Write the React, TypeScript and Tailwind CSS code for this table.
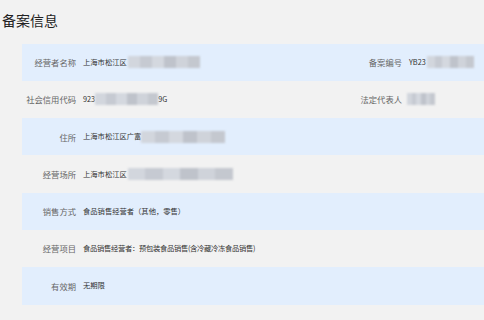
import React from "react";

// Pixelated gray block standing in for redacted text
const Masked: React.FC<{ className: string }> = ({ className }) => (
  <span className={`inline-flex h-[12px] overflow-hidden blur-[1.2px] align-middle ${className}`}>
    <span className="flex-1 bg-[#d2d6dd]" />
    <span className="flex-1 bg-[#c6cad2]" />
    <span className="flex-1 bg-[#d4d8df]" />
    <span className="flex-1 bg-[#bfc3cb]" />
    <span className="flex-1 bg-[#cfd3da]" />
    <span className="flex-1 bg-[#c4c8cf]" />
  </span>
);

const Label: React.FC<{ children: React.ReactNode }> = ({ children }) => (
  <div className="w-[54px] shrink-0 text-right text-[8.3px] text-[#666]">{children}</div>
);

const Value: React.FC<{ children: React.ReactNode; className?: string }> = ({ children, className = "" }) => (
  <div className={`ml-[7px] flex items-center text-[7.3px] text-[#333] whitespace-nowrap ${className}`}>{children}</div>
);

const App: React.FC = () => {
  return (
    <div
      className="h-[320px] w-[484px] overflow-hidden bg-[#f2f2f2]"
      style={{ fontFamily: '"Noto Sans CJK SC", "Noto Sans", sans-serif' }}
    >
      <h1 className="pl-[2px] pt-[9px] text-[14px] leading-[22px] text-[#222]">备案信息</h1>

      <div className="ml-[22px] mt-[12.5px]">
        {/* 经营者名称 / 备案编号 */}
        <div className="flex h-[37.3px] items-center bg-[#e2eefd]">
          <div className="flex w-[308px] items-center">
            <Label>经营者名称</Label>
            <Value>
              上海市松江区
              <Masked className="ml-[1px] w-[72px]" />
            </Value>
          </div>
          <div className="w-[72px] text-right text-[8.3px] text-[#666]">备案编号</div>
          <Value>
            YB23
            <Masked className="ml-[1px] w-[47px]" />
          </Value>
        </div>

        {/* 社会信用代码 / 法定代表人 */}
        <div className="flex h-[37.3px] items-center">
          <div className="flex w-[308px] items-center">
            <Label>社会信用代码</Label>
            <Value>
              923
              <Masked className="w-[63px]" />
              9G
            </Value>
          </div>
          <div className="w-[72px] text-right text-[8.3px] text-[#666]">法定代表人</div>
          <Value>
            <Masked className="-ml-[2px] w-[28px] h-[10px]" />
          </Value>
        </div>

        <div className="flex h-[37.3px] items-center bg-[#e2eefd]">
          <Label>住所</Label>
          <Value>
            上海市松江区广富
            <Masked className="w-[84px]" />
          </Value>
        </div>

        <div className="flex h-[37.3px] items-center">
          <Label>经营场所</Label>
          <Value>
            上海市松江区
            <Masked className="ml-[1px] w-[105px]" />
          </Value>
        </div>

        <div className="flex h-[37.3px] items-center bg-[#e2eefd]">
          <Label>销售方式</Label>
          <Value>食品销售经营者（其他，零售）</Value>
        </div>

        <div className="flex h-[37.3px] items-center">
          <Label>经营项目</Label>
          <Value className="tracking-[-0.3px]">食品销售经营者：预包装食品销售(含冷藏冷冻食品销售)</Value>
        </div>

        <div className="flex h-[37.3px] items-center bg-[#e2eefd]">
          <Label>有效期</Label>
          <Value>无期限</Value>
        </div>
      </div>
    </div>
  );
};

export default App;
